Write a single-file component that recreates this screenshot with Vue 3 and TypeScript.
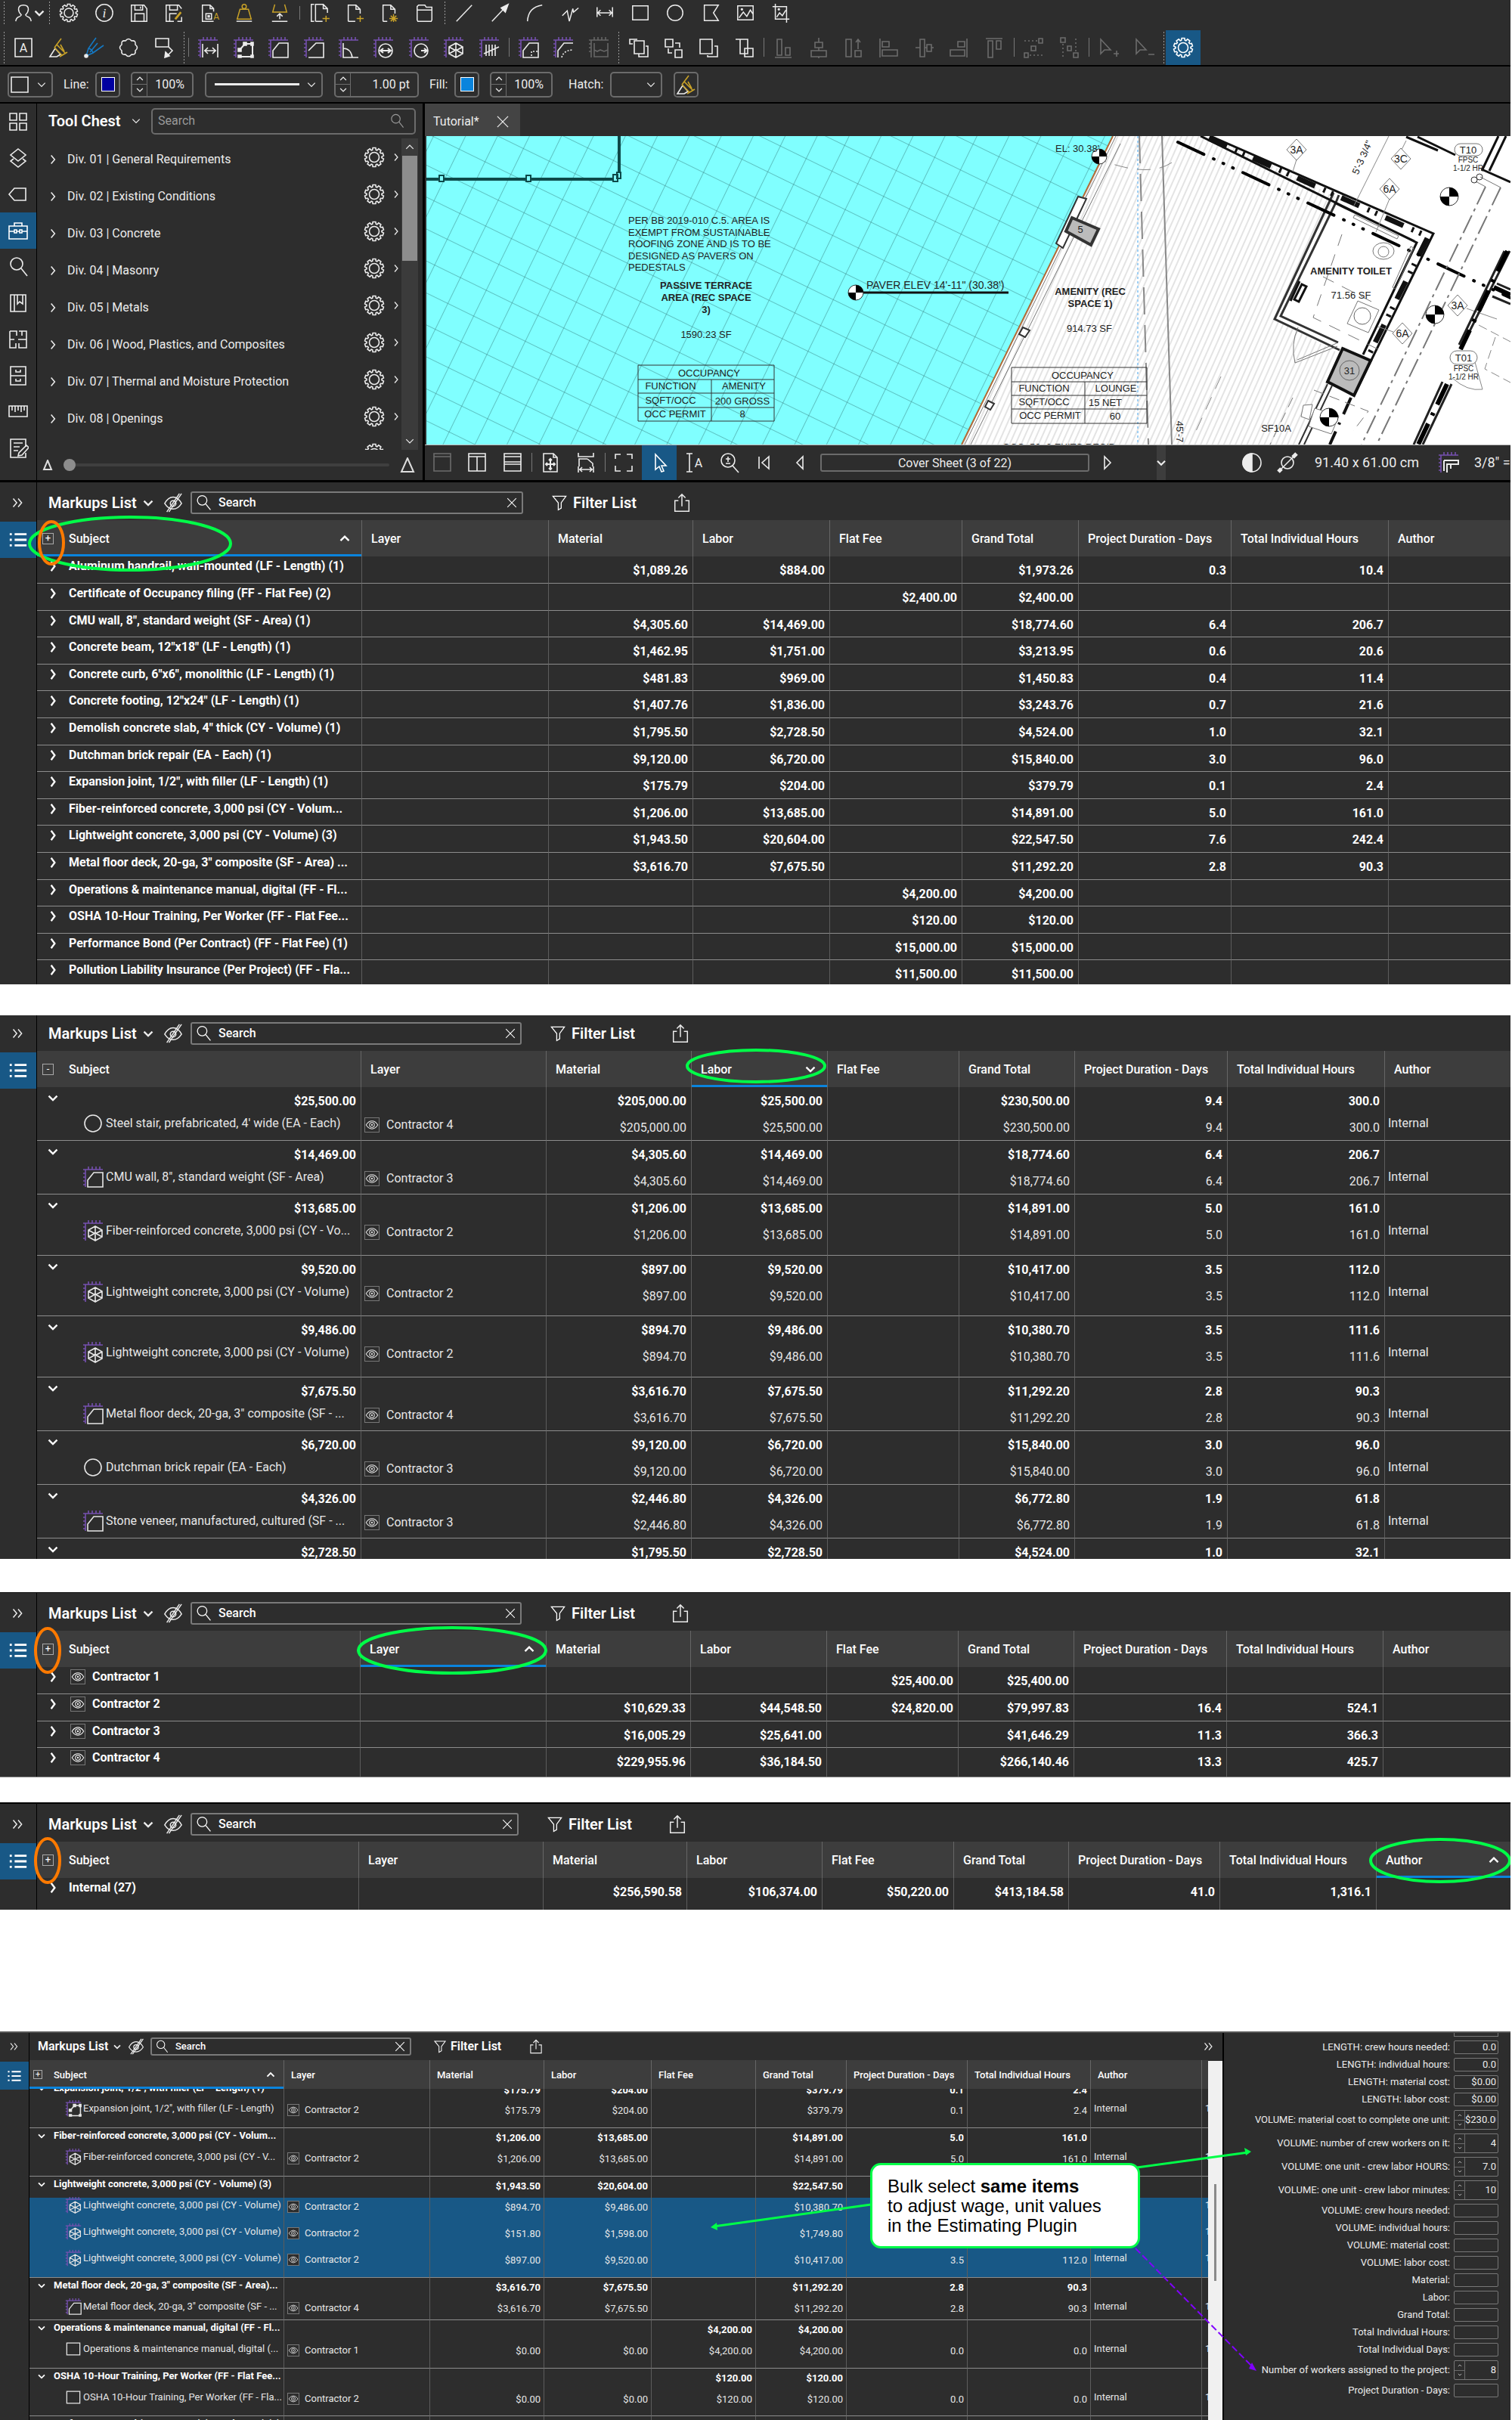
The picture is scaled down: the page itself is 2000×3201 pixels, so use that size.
<script setup lang="ts">
import { h } from 'vue'

/* ---------- icons ---------- */
const W = '#c9a227'
const gearPath = (() => {
  const pts: string[] = []
  const teeth = 10
  for (let i = 0; i < teeth; i++) {
    const base = (i / teeth) * Math.PI * 2
    const steps: [number, number][] = [[-0.24, 10], [-0.15, 12.6], [0.15, 12.6], [0.24, 10]]
    for (const [off, r] of steps) {
      pts.push(`${(14 + r * Math.sin(base + off)).toFixed(2)} ${(14 - r * Math.cos(base + off)).toFixed(2)}`)
    }
  }
  return 'M' + pts.join('L') + 'Z'
})()
const ruler =
  '<path stroke="#7650b0" d="M4 27V4M1 4h26M8 4V0M13 4V0M18 4V0M23 4V0M4 9H1M4 14H1M4 19H1M4 24H1"/>'
const gear = `<path d="${gearPath}"/><circle cx="14" cy="14" r="6.5"/>`
const page = 'M5 26V3h11l6 6v6M16 3v6h6'

const icons: Record<string, string> = {
  user: '<path d="M3 26q1-5 4-6t4-3q-4-4-4-8 0-6 7-6t7 6q0 4-4 8 1 2 4 3t4 6"/>',
  down: '<path d="M8 11l6 6 6-6"/>',
  downBold: '<path stroke-width="3" d="M7 11l7 7 7-7"/>',
  upBold: '<path stroke-width="3" d="M7 18l7-7 7 7"/>',
  rightBold: '<path stroke-width="3" d="M11 6l6 8-6 8"/>',
  up: '<path d="M8 17l6-6 6 6"/>',
  right: '<path d="M11 7l6 7-6 7"/>',
  gear,
  info: '<circle cx="14" cy="14" r="12"/><text x="14" y="20" font-family="Liberation Serif, serif" font-style="italic" font-size="19" text-anchor="middle" fill="currentColor" stroke="none">i</text>',
  save: '<path d="M3 3h18l4 5v18H3zM8 3v7h11V3M16 5v3M8 26V15h13v11"/>',
  saveAs: `<path d="M14 26H3V3h18l4 5M8 3v7h11V3M8 26V15h10M25 20v6h-6"/><path stroke="${W}" stroke-width="3" d="M16 23l8-10"/>`,
  docA: `<path d="M20 12V8l-5-5H4v23h16M15 3v5h5"/><path d="M9 15h8v8H9zM12 18h2v2h-2z"/><text x="24" y="24" font-family="Roboto, sans-serif" font-size="13" text-anchor="middle" fill="${W}" stroke="none">A</text>`,
  weight: `<path stroke="${W}" d="M8 9h12l4 14H4z"/><circle cx="14" cy="5" r="3" stroke="${W}"/><path d="M3 26h22"/>`,
  upload: `<path stroke="${W}" d="M7 2L4 13h20L21 2"/><path d="M14 23v-8M10 19l4-4 4 4M3 26h22"/>`,
  docsPlus: `<path d="M7 2H3v24h4M9 26V2h11l6 6v6M20 2v6h6M9 26h10"/><path stroke="${W}" d="M24 18v9M19 22h10"/>`,
  docPlus: `<path d="${page}M5 26h10"/><path stroke="${W}" d="M22 18v9M17 22h10"/>`,
  docStar: `<path d="${page}M5 26h6"/><path stroke="${W}" d="M20 16v11M14 22h12M16 18l8 8M24 18l-8 8"/>`,
  folder: '<path d="M3 24V5l2-2h9l2 3h8v18l-1 2H4zM3 10h21"/>',
  line: '<path d="M3 26L25 3"/>',
  arrow: '<path d="M3 26L20 8"/><path fill="currentColor" d="M26 2l-4 11-6-6z"/>',
  arc: '<path d="M4 26Q5 6 25 3"/>',
  poly: '<path d="M3 18l7-7 3 15 5-18 1 5 7-6"/>',
  dim: '<path d="M3 6v14M25 6v14M3 14h22M8 10l-4 4 4 4M20 10l4 4-4 4"/>',
  rect: '<path d="M3 4h22v20H3z"/>',
  circle: '<circle cx="14" cy="14" r="11"/>',
  flag: '<path d="M5 3h20l-7 11 7 11H5z"/>',
  image: '<path d="M3 4h22v20H3zM5 21l6-8 5 6 5-9 4 6"/><circle cx="9" cy="9" r="1"/>',
  crop: '<path d="M6 1v22h20M2 5h20v23M8 20l4-6 4 4 5-8"/><circle cx="11" cy="9" r="1"/>',
  textBox: '<path d="M3 2h22v24H3z"/><text x="14" y="20" font-family="Roboto, sans-serif" font-size="16" text-anchor="middle" fill="currentColor" stroke="none">A</text>',
  marker: `<path d="M2 26L9 15l7 8-5 3z"/><path stroke="${W}" d="M8 14l10 10M15 26l10-6M8 14l3-4 12 12M11 10l6-8M16 10l5 9"/>`,
  pen: '<path stroke="#1479c4" d="M17 1L7 15l-3 10 9-4L27 11M7 15q5 1 6 6M9 20L19 8"/><circle cx="4" cy="25" r="2" fill="currentColor"/>',
  cloud: '<path d="M10 5q4-5 8 0 6-1 5 5 5 4 0 8 1 6-5 5-4 5-8 0-6 1-5-5-5-4 0-8-1-6 5-5z"/>',
  callout: '<path d="M3 2h17v11H3zM20 13l5 5-8 8"/><path fill="currentColor" d="M15 27l1-7 5 5z"/>',
  mLength: ruler + '<path d="M7 9v18M27 9v18M9 18h16M14 14l-4 4 4 4M20 14l4 4-4 4"/>',
  mPoly: ruler + '<path stroke-width="2" d="M9 17l7-8h10v17H9"/><path fill="currentColor" d="M7 15h4v4H7zM14 7h4v4h-4zM24 7h3v4h-3zM7 24h4v3H7zM24 24h3v3h-3z"/>',
  mArea: ruler + '<path d="M7 27V18l8-10h12v19z"/>',
  mArea2: ruler + '<path d="M7 18L17 8h10v19H7"/>',
  mAngle: ruler + '<path d="M7 8v19h20M7 15q10 0 12 12"/>',
  mDiam: ruler + '<circle cx="17" cy="18" r="9"/><path stroke-width="2" d="M10 18h14M14 15l-4 3 4 3M20 15l4 3-4 3"/>',
  mRad: ruler + '<circle cx="17" cy="18" r="9"/><path stroke-width="2" d="M17 18h7M21 15l4 3-4 3"/>',
  mVol: ruler + '<path d="M8 13l9-5 9 5v9l-9 5-9-5zM8 13l9 5 9-5M17 18v9M8 22l9-5 9 5M17 8v9"/>',
  mCount: ruler + '<path d="M10 10v15M14 10v15M18 10v15M22 10v15M7 22l20-9"/>',
  mCut: ruler + '<path d="M7 27V18l8-10h12v19z"/><path stroke-dasharray="2 2" d="M18 25v-6h8"/>',
  mCut2: ruler + '<path d="M7 27V18l8-10h12"/><path stroke-dasharray="2 2" d="M12 27q2-9 14-10"/>',
  mSplit: '<path stroke="#666" d="M4 27V4M1 4h26M8 4V0M13 4V0M18 4V0M23 4V0M4 9H1M4 14H1M4 19H1M8 8v18h18V8M8 17l4 2 4-2 5 2 5-2"/>',
  front: '<path d="M9 5h13v17H9zM7 9H3V3h10M24 12h3v14H15v-4"/>',
  back: '<path d="M3 3h10v10H3zM16 17h9v10h-9zM16 8h6v6M12 21H7v-6"/>',
  forward: '<path d="M3 3h16v19H3zM22 12h4v14H13v-2"/>',
  backward: '<path d="M3 3h16v19H9V3M15 15h11v11H15z"/>',
  aBottom: '<path d="M3 27h22M6 3h6v21H6zM17 14h6v10h-6z"/>',
  aMid: '<path d="M9 7h10v7H9zM4 18h20v8H4zM14 1v6M14 14v4M14 26v2"/>',
  aUp: '<path d="M4 3h7v23H4zM16 18h8v8h-8zM20 16V3M17 7l3-4 3 4"/>',
  aLeft: '<path d="M3 2v25M6 6h9v7H6zM6 17h20v8H6z"/>',
  aCenter: '<path d="M9 3h6v23H9zM18 10h6v9h-6zM3 14h6M15 14h3M24 14h3"/>',
  aRight: '<path d="M25 2v25M13 6h9v7h-9zM3 17h19v8H3z"/>',
  aTop: '<path d="M3 2h22M6 5h6v22H6zM17 5h6v11h-6z"/>',
  spread: '<path d="M21 2h5v6h-5zM11 12h6v6h-6zM2 21h5v6H2z"/><path stroke-dasharray="2 3" d="M2 5h18M9 24h17"/>',
  spread2: '<path d="M3 1h6v6H3zM12 12h5v6h-5zM20 21h6v6h-6z"/><path stroke-dasharray="2 3" d="M6 9v18M23 2v18"/>',
  curPlus: '<path d="M4 3v19l5-5h8zM25 18v8M21 22h8"/>',
  curMinus: '<path d="M4 3v19l5-5h8zM20 23h8"/>',
  grid: '<path d="M3 3h9v9H3zM16 3h9v9h-9zM3 16h9v9H3zM16 16h9v9h-9z"/>',
  layers: '<path d="M14 2l10 8-10 8-10-8zM8 15l-4 3 10 8 10-8-4-3"/>',
  tag: '<path d="M2 14l7-8h15v16H9z"/>',
  toolbox: '<path d="M2 8h24v17H2zM9 8V4h10v4M2 15h7M12 15h4M19 15h7M9 13h3v4H9zM16 13h3v4h-3z"/>',
  search: '<circle cx="12" cy="10" r="8"/><path d="M18 16l8 10"/>',
  bookmark: '<path d="M4 3h20v22H4zM9 3v22M13 3v12l3-3 4 3V3"/>',
  plan: '<path d="M3 3h9v6M15 3h10v22H15v-6M3 3v22h8v-6M3 14h6M14 14h11M19 3v6"/>',
  cabinet: '<path d="M4 2h20v24H4zM4 14h20M11 6v3h6V6M11 18v3h6v-3"/>',
  measure: '<path d="M2 6h24v14H2zM6 6v6M10 6v8M14 6v6M18 6v8M22 6v6"/>',
  form: '<path d="M24 12V2H4v24h20v-6M8 7h12M8 12h8M8 17h6"/><path d="M25 10l3 3-9 10-5 1 1-4z"/>',
  list: '<path stroke-width="3" d="M9 6h17M9 14h17M9 22h17M2 6h3M2 14h3M2 22h3"/>',
  more: '<path d="M7 8l5 6-5 6M14 8l5 6-5 6"/>',
  close: '<path d="M5 5l18 18M23 5L5 23"/>',
  hide: '<path d="M2 15q5-9 12-9t12 9q-5 8-12 8T2 15z"/><circle cx="14" cy="15" r="4"/><path d="M8 27L26 1M5 27L23 1"/>',
  eye: '<path d="M2 14q5-8 12-8t12 8q-5 8-12 8T2 14z"/><circle cx="14" cy="14" r="5"/><circle cx="14" cy="14" r="1"/>',
  filter: '<path d="M3 3h22l-8 11v9l-5 3V14z"/>',
  share: '<path d="M9 11H4v15h20V11h-5M14 19V2M9 7l5-5 5 5"/>',
  pane: '<path d="M3 2h22v23H3zM3 6h22"/>',
  paneV: '<path d="M3 2h22v23H3zM3 6h22M14 6v19"/>',
  paneH: '<path d="M3 2h22v23H3zM3 6h22M3 13h22M3 16h22"/>',
  fitPage: '<path d="M18 2H5v24h18V7zM18 2v5h5"/><path stroke-width="2" d="M14 9v14M8 16h12M12 11l2-2 2 2M12 21l2 2 2-2M10 14l-2 2 2 2M18 14l2 2-2 2"/>',
  fitWidth: '<path d="M4 1v5h20V1M16 9H5v10M16 9l7 6v4M4 19v8M24 19v8M5 23h18M9 20l-3 3 3 3M19 20l3 3-3 3"/>',
  full: '<path d="M3 9V3h7M18 3h7v6M25 18v7h-7M10 25H3v-7"/>',
  cursor: '<path d="M9 3v20l5-4 3 7 3-1-3-7h6z"/>',
  textSel: '<path d="M4 2h8M8 2v24M4 26h8"/><text x="20" y="20" font-family="Roboto, sans-serif" font-size="16" text-anchor="middle" fill="currentColor" stroke="none">A</text>',
  zoomIn: '<circle cx="12" cy="11" r="9"/><path d="M18 18l8 9M12 6v7M9 9h6M9 15h6"/>',
  first: '<path d="M7 6v16M20 6v16L11 14z"/>',
  prev: '<path d="M18 6v16L10 14z"/>',
  next: '<path d="M10 6v16l8-8z"/>',
  contrast: '<circle cx="14" cy="14" r="12"/><path fill="currentColor" d="M14 2a12 12 0 0 0 0 24z"/>',
  noSnap: '<circle cx="14" cy="14" r="8"/><path d="M3 25L25 3"/><path stroke-width="5" d="M2 26l4-4M21 7l5-5"/>',
  caliper: ruler + '<path stroke-width="2" d="M8 11h19v5H12v11M8 11v14M17 16v6"/>',
  cube: '',
}
icons.cube = icons.mVol

const Icon = (props: { name: string }) =>
  h('svg', {
    viewBox: '0 0 28 28',
    class: 'icon',
    fill: 'none',
    stroke: 'currentColor',
    'aria-hidden': 'true',
    innerHTML: icons[props.name] ?? '',
  })
Icon.props = ['name']

/* ---------- toolbars ---------- */
interface Group { sep: 'dots' | 'solid'; items: string[]; dim?: boolean }
const rowOne: Group[] = [
  { sep: 'dots', items: ['gear', 'info', 'save', 'saveAs', 'docA', 'weight', 'upload'] },
  { sep: 'solid', items: ['docsPlus', 'docPlus', 'docStar', 'folder'] },
  { sep: 'dots', items: ['line', 'arrow', 'arc', 'poly', 'dim', 'rect', 'circle', 'flag', 'image', 'crop'] },
]
const rowTwo: Group[] = [
  { sep: 'dots', items: ['textBox', 'marker', 'pen', 'cloud', 'callout'] },
  { sep: 'dots', items: [] },
  { sep: 'solid', items: ['mLength', 'mPoly', 'mArea', 'mArea2', 'mAngle', 'mDiam', 'mRad', 'mVol', 'mCount'] },
  { sep: 'solid', items: ['mCut', 'mCut2', 'mSplit'] },
  { sep: 'dots', items: ['front', 'back', 'forward', 'backward'] },
  { sep: 'solid', items: ['aBottom', 'aMid', 'aUp', 'aLeft', 'aCenter', 'aRight', 'aTop'], dim: true },
  { sep: 'solid', items: ['spread', 'spread2'], dim: true },
  { sep: 'solid', items: ['curPlus', 'curMinus'], dim: true },
]
const groupWidth = (n: number) => ({ width: `${Math.floor(n * 46.5)}px` })
const railIcons = ['grid', 'layers', 'tag', 'toolbox', 'search', 'bookmark', 'plan', 'cabinet', 'measure', 'form']
const divisions = [
  'Div. 01 | General Requirements',
  'Div. 02 | Existing Conditions',
  'Div. 03 | Concrete',
  'Div. 04 | Masonry',
  'Div. 05 | Metals',
  'Div. 06 | Wood, Plastics, and Composites',
  'Div. 07 | Thermal and Moisture Protection',
  'Div. 08 | Openings',
  '',
]

/* ---------- floor plan ---------- */
const diamonds = [
  { x: 1715, y: 198, t: '3A' },
  { x: 1853, y: 210, t: '3C' },
  { x: 1838, y: 250, t: '6A' },
  { x: 1855, y: 441, t: '6A' },
  { x: 1928, y: 404, t: '3A' },
]
const targets = [
  { x: 1132, y: 387, r: 10 },
  { x: 1454, y: 207, r: 10 },
  { x: 1917, y: 260, r: 12 },
  { x: 1898, y: 416, r: 12 },
  { x: 1758, y: 552, r: 12 },
]

/* ---------- markup lists ---------- */
type Vals = [string, string, string, string, string, string]
interface Row {
  label: string
  v: Vals
  item?: boolean
  icon?: string
  layer?: string
  author?: string
  eye?: boolean
  money?: boolean
  height: number
  end?: boolean
  selected?: boolean
  cut?: boolean
}
interface Mark { cx: number; cy: number; rx: number; ry: number; tone: string }
interface Panel {
  id: string
  search: number
  cols: number[]
  sort: number
  dir: 'upBold' | 'downBold'
  open: boolean
  fold: string
  rows: Row[]
  marks: Mark[]
}
const heads = ['Subject', 'Layer', 'Material', 'Labor', 'Flat Fee', 'Grand Total', 'Project Duration - Days', 'Total Individual Hours', 'Author']

const simple = (label: string, m: string, l: string, f: string, g: string, d: string, hr: string, height = 36): Row => ({
  label, v: [m, l, f, g, d, hr], height, end: true,
})
const bySubject: Row[] = [
  simple('Aluminum handrail, wall-mounted (LF - Length) (1)', '$1,089.26', '$884.00', '', '$1,973.26', '0.3', '10.4'),
  simple('Certificate of Occupancy filing (FF - Flat Fee) (2)', '', '', '$2,400.00', '$2,400.00', '', ''),
  simple('CMU wall, 8", standard weight (SF - Area) (1)', '$4,305.60', '$14,469.00', '', '$18,774.60', '6.4', '206.7'),
  simple('Concrete beam, 12"x18" (LF - Length) (1)', '$1,462.95', '$1,751.00', '', '$3,213.95', '0.6', '20.6'),
  simple('Concrete curb, 6"x6", monolithic (LF - Length) (1)', '$481.83', '$969.00', '', '$1,450.83', '0.4', '11.4'),
  simple('Concrete footing, 12"x24" (LF - Length) (1)', '$1,407.76', '$1,836.00', '', '$3,243.76', '0.7', '21.6'),
  simple('Demolish concrete slab, 4" thick (CY - Volume) (1)', '$1,795.50', '$2,728.50', '', '$4,524.00', '1.0', '32.1'),
  simple('Dutchman brick repair (EA - Each) (1)', '$9,120.00', '$6,720.00', '', '$15,840.00', '3.0', '96.0'),
  simple('Expansion joint, 1/2", with filler (LF - Length) (1)', '$175.79', '$204.00', '', '$379.79', '0.1', '2.4'),
  simple('Fiber-reinforced concrete, 3,000 psi (CY - Volum...', '$1,206.00', '$13,685.00', '', '$14,891.00', '5.0', '161.0'),
  simple('Lightweight concrete, 3,000 psi (CY - Volume) (3)', '$1,943.50', '$20,604.00', '', '$22,547.50', '7.6', '242.4'),
  simple('Metal floor deck, 20-ga, 3" composite (SF - Area) ...', '$3,616.70', '$7,675.50', '', '$11,292.20', '2.8', '90.3'),
  simple('Operations & maintenance manual, digital (FF - Fl...', '', '', '$4,200.00', '$4,200.00', '', ''),
  simple('OSHA 10-Hour Training, Per Worker (FF - Flat Fee...', '', '', '$120.00', '$120.00', '', ''),
  simple('Performance Bond (Per Contract) (FF - Flat Fee) (1)', '', '', '$15,000.00', '$15,000.00', '', ''),
  simple('Pollution Liability Insurance (Per Project) (FF - Fla...', '', '', '$11,500.00', '$11,500.00', '', ''),
].map((r, i) => ({ ...r, height: i % 5 === 2 || i % 5 === 4 ? 35 : 36 }))

const pair = (labor: string, label: string, icon: string, layer: string, m: string, g: string, d: string, hr: string, height = 36): Row[] => [
  { label: labor, v: [m, labor, '', g, d, hr], money: true, height: 35 },
  { label, v: [m, labor, '', g, d, hr], item: true, icon, layer, author: 'Internal', height, end: true },
]
const byLabor: Row[] = [
  ...pair('$25,500.00', "Steel stair, prefabricated, 4' wide (EA - Each)", 'circle', 'Contractor 4', '$205,000.00', '$230,500.00', '9.4', '300.0'),
  ...pair('$14,469.00', 'CMU wall, 8", standard weight (SF - Area)', 'mArea', 'Contractor 3', '$4,305.60', '$18,774.60', '6.4', '206.7'),
  ...pair('$13,685.00', 'Fiber-reinforced concrete, 3,000 psi (CY - Vo...', 'cube', 'Contractor 2', '$1,206.00', '$14,891.00', '5.0', '161.0', 46),
  ...pair('$9,520.00', 'Lightweight concrete, 3,000 psi (CY - Volume)', 'cube', 'Contractor 2', '$897.00', '$10,417.00', '3.5', '112.0', 45),
  ...pair('$9,486.00', 'Lightweight concrete, 3,000 psi (CY - Volume)', 'cube', 'Contractor 2', '$894.70', '$10,380.70', '3.5', '111.6', 46),
  ...pair('$7,675.50', 'Metal floor deck, 20-ga, 3" composite (SF - ...', 'mArea', 'Contractor 4', '$3,616.70', '$11,292.20', '2.8', '90.3'),
  ...pair('$6,720.00', 'Dutchman brick repair (EA - Each)', 'circle', 'Contractor 3', '$9,120.00', '$15,840.00', '3.0', '96.0'),
  ...pair('$4,326.00', 'Stone veneer, manufactured, cultured (SF - ...', 'mArea', 'Contractor 3', '$2,446.80', '$6,772.80', '1.9', '61.8'),
  { label: '$2,728.50', v: ['$1,795.50', '$2,728.50', '', '$4,524.00', '1.0', '32.1'], money: true, height: 35 },
]
const byLayer: Row[] = [
  { ...simple('Contractor 1', '', '', '$25,400.00', '$25,400.00', '', ''), eye: true },
  { ...simple('Contractor 2', '$10,629.33', '$44,548.50', '$24,820.00', '$79,997.83', '16.4', '524.1'), eye: true },
  { ...simple('Contractor 3', '$16,005.29', '$25,641.00', '', '$41,646.29', '11.3', '366.3', 35), eye: true },
  { ...simple('Contractor 4', '$229,955.96', '$36,184.50', '', '$266,140.46', '13.3', '425.7', 40), eye: true, end: false },
]
const byAuthor: Row[] = [
  { ...simple('Internal (27)', '$256,590.58', '$106,374.00', '$50,220.00', '$413,184.58', '41.0', '1,316.1', 44), end: false },
]
const sub = (label: string, icon: string, layer: string, v: Vals, height: number, end = true, selected = false, author = 'Internal'): Row => ({
  label, icon, layer, v, height, end, selected, author, item: true,
})
const head = (label: string, v: Vals, height = 28, cut = false): Row => ({ label, v, height, cut })
const lw = 'Lightweight concrete, 3,000 psi (CY - Volume)'
const bulk: Row[] = [
  head('Expansion joint, 1/2", with filler (LF - Length) (1)', ['$175.79', '$204.00', '', '$379.79', '0.1', '2.4'], 16, true),
  sub('Expansion joint, 1/2", with filler (LF - Length)', 'mPoly', 'Contractor 2', ['$175.79', '$204.00', '', '$379.79', '0.1', '2.4'], 36),
  head('Fiber-reinforced concrete, 3,000 psi (CY - Volum...', ['$1,206.00', '$13,685.00', '', '$14,891.00', '5.0', '161.0']),
  sub('Fiber-reinforced concrete, 3,000 psi (CY - V...', 'cube', 'Contractor 2', ['$1,206.00', '$13,685.00', '', '$14,891.00', '5.0', '161.0'], 36),
  head('Lightweight concrete, 3,000 psi (CY - Volume) (3)', ['$1,943.50', '$20,604.00', '', '$22,547.50', '', '']),
  sub(lw, 'cube', 'Contractor 2', ['$894.70', '$9,486.00', '', '$10,380.70', '', ''], 35, false, true, ''),
  sub(lw, 'cube', 'Contractor 2', ['$151.80', '$1,598.00', '', '$1,749.80', '', ''], 35, false, true, ''),
  sub(lw, 'cube', 'Contractor 2', ['$897.00', '$9,520.00', '', '$10,417.00', '3.5', '112.0'], 36, true, true),
  head('Metal floor deck, 20-ga, 3" composite (SF - Area)...', ['$3,616.70', '$7,675.50', '', '$11,292.20', '2.8', '90.3']),
  sub('Metal floor deck, 20-ga, 3" composite (SF - ...', 'mArea', 'Contractor 4', ['$3,616.70', '$7,675.50', '', '$11,292.20', '2.8', '90.3'], 28),
  head('Operations & maintenance manual, digital (FF - Fl...', ['', '', '$4,200.00', '$4,200.00', '', '']),
  sub('Operations & maintenance manual, digital (...', 'rect', 'Contractor 1', ['$0.00', '$0.00', '$4,200.00', '$4,200.00', '0.0', '0.0'], 36),
  head('OSHA 10-Hour Training, Per Worker (FF - Flat Fee...', ['', '', '$120.00', '$120.00', '', '']),
  sub('OSHA 10-Hour Training, Per Worker (FF - Fla...', 'rect', 'Contractor 2', ['$0.00', '$0.00', '$120.00', '$120.00', '0.0', '0.0'], 35),
  head('Performance Bond (Per Contract) (FF - Flat Fee) (1)', ['', '', '', '', '', '']),
]

const green = '#00ff48'
const orange = '#ff7a00'
const panels: Panel[] = [
  {
    id: 'subject', search: 440, cols: [430, 247, 191, 181, 175, 154, 202, 208], sort: 0, dir: 'upBold', open: false, fold: '+', rows: bySubject,
    marks: [{ cx: 172, cy: 81, rx: 133, ry: 35, tone: green }, { cx: 68, cy: 80, rx: 16, ry: 28, tone: orange }],
  },
  {
    id: 'labor', search: 438, cols: [429, 245, 192, 180, 174, 153, 202, 208], sort: 3, dir: 'downBold', open: true, fold: '-', rows: byLabor,
    marks: [{ cx: 1000, cy: 67, rx: 91, ry: 21, tone: green }],
  },
  {
    id: 'layers', search: 438, cols: [428, 246, 191, 180, 174, 153, 202, 207], sort: 1, dir: 'upBold', open: false, fold: '+', rows: byLayer,
    marks: [{ cx: 598, cy: 76, rx: 124, ry: 30, tone: green }, { cx: 63, cy: 76, rx: 16, ry: 29, tone: orange }],
  },
  {
    id: 'author', search: 434, cols: [426, 244, 190, 179, 174, 152, 200, 207], sort: 8, dir: 'upBold', open: false, fold: '+', rows: byAuthor,
    marks: [{ cx: 1905, cy: 75, rx: 92, ry: 28, tone: green }, { cx: 63, cy: 75, rx: 16, ry: 29, tone: orange }],
  },
  {
    id: 'bulk', search: 345, cols: [337, 193, 151, 142, 138, 120, 160, 163, 147], sort: 0, dir: 'upBold', open: true, fold: '+', rows: bulk,
    marks: [],
  },
]

/* ---------- estimating form ---------- */
const fields: { label: string; value: string; spin?: boolean }[] = [
  { label: 'LENGTH: crew hours needed:', value: '0.0' },
  { label: 'LENGTH: individual hours:', value: '0.0' },
  { label: 'LENGTH: material cost:', value: '$0.00' },
  { label: 'LENGTH: labor cost:', value: '$0.00' },
  { label: 'VOLUME: material cost to complete one unit:', value: '$230.00', spin: true },
  { label: 'VOLUME: number of crew workers on it:', value: '4', spin: true },
  { label: 'VOLUME: one unit - crew labor HOURS:', value: '7.0', spin: true },
  { label: 'VOLUME: one unit - crew labor minutes:', value: '10', spin: true },
  { label: 'VOLUME: crew hours needed:', value: '' },
  { label: 'VOLUME: individual hours:', value: '' },
  { label: 'VOLUME: material cost:', value: '' },
  { label: 'VOLUME: labor cost:', value: '' },
  { label: 'Material:', value: '' },
  { label: 'Labor:', value: '' },
  { label: 'Grand Total:', value: '' },
  { label: 'Total Individual Hours:', value: '' },
  { label: 'Total Individual Days:', value: '' },
  { label: 'Number of workers assigned to the project:', value: '8', spin: true },
  { label: 'Project Duration - Days:', value: '' },
]
</script>

<template>
  <div class="page">
    <section class="app">
      <div class="tools">
        <div class="tool-row first">
          <span class="sep dots"></span>
          <button class="user" aria-label="Account"><Icon name="user" /><Icon class="tiny" name="downBold" /></button>
          <template v-for="(g, i) in rowOne" :key="i">
            <span class="sep" :class="g.sep"></span>
            <div class="group" :style="groupWidth(g.items.length)">
              <button v-for="n in g.items" :key="n" :aria-label="n"><Icon :name="n" /></button>
            </div>
          </template>
        </div>
        <div class="tool-row">
          <template v-for="(g, i) in rowTwo" :key="i">
            <span class="sep" :class="g.sep"></span>
            <div v-if="g.items.length" class="group" :class="{ dim: g.dim }" :style="groupWidth(g.items.length)">
              <button v-for="n in g.items" :key="n" :aria-label="n"><Icon :name="n" /></button>
            </div>
          </template>
          <span class="sep dots"></span>
          <button class="picked" aria-label="Settings"><Icon name="gear" /></button>
        </div>
      </div>

      <div class="props">
        <label class="drop shape"><Icon name="rect" /><select aria-label="Shape"></select><Icon class="tiny" name="down" /></label>
        <span class="cap line-cap">Line:</span>
        <button class="chip" aria-label="Line colour"><i class="swatch navy"></i></button>
        <div class="spin w83"><span class="steps"><button aria-label="Up"><Icon name="up" /></button><button aria-label="Down"><Icon name="down" /></button></span><input aria-label="Line opacity" value="100%" /></div>
        <label class="drop style"><i class="stroke"></i><select aria-label="Line style"></select><Icon class="tiny" name="down" /></label>
        <div class="spin w112"><span class="steps"><button aria-label="Up"><Icon name="up" /></button><button aria-label="Down"><Icon name="down" /></button></span><input aria-label="Line width" value="1.00 pt" /></div>
        <span class="cap fill-cap">Fill:</span>
        <button class="chip" aria-label="Fill colour"><i class="swatch sky"></i></button>
        <div class="spin w83"><span class="steps"><button aria-label="Up"><Icon name="up" /></button><button aria-label="Down"><Icon name="down" /></button></span><input aria-label="Fill opacity" value="100%" /></div>
        <span class="cap hatch-cap">Hatch:</span>
        <label class="drop hatch"><select aria-label="Hatch"></select><Icon class="tiny" name="down" /></label>
        <button class="chip" aria-label="Highlight"><Icon name="marker" /></button>
      </div>

      <div class="work">
        <nav class="rail-top">
          <button v-for="n in railIcons" :key="n" :class="{ picked: n === 'toolbox' }" :aria-label="n"><Icon :name="n" /></button>
        </nav>
        <aside class="chest">
          <header>
            <h2>Tool Chest</h2>
            <Icon class="tiny" name="down" />
            <label class="find"><input type="text" placeholder="Search" aria-label="Search tools" /><Icon name="search" /></label>
          </header>
          <div class="chest-body">
            <ul>
              <li v-for="d in divisions" :key="d">
                <Icon class="open" name="right" /><span>{{ d }}</span>
                <Icon class="cog" name="gear" /><Icon class="go" name="right" />
              </li>
            </ul>
            <div class="scroll"><Icon name="up" /><i></i><Icon name="down" /></div>
          </div>
          <footer>
            <svg class="tri" width="14" height="14" viewBox="0 0 14 14"><path d="M7 1l5 12H2z" /></svg>
            <input type="range" min="0" max="100" value="0" aria-label="Thumbnail size" />
            <svg class="tri" width="20" height="20" viewBox="0 0 20 20"><path d="M10 1l8 18H2z" /></svg>
          </footer>
        </aside>
        <main class="doc">
          <div class="tabs"><div class="tab"><span>Tutorial*</span><button aria-label="Close tab"><Icon name="close" /></button></div></div>
          <svg class="plan" viewBox="564 180 1434 408" preserveAspectRatio="xMinYMin slice">
            <defs>
              <pattern id="pavers" width="38" height="38" patternUnits="userSpaceOnUse" patternTransform="translate(573 180) rotate(26)">
                <path d="M0 0H38M0 0V38" fill="none" stroke="#3a8585" stroke-width="1" />
              </pattern>
              <pattern id="floor" width="7" height="7" patternUnits="userSpaceOnUse" patternTransform="rotate(24)">
                <path d="M3 0V7" fill="none" stroke="#c8c8c8" stroke-width="1" />
              </pattern>
            </defs>
            <path fill="#fff" d="M564 180h1434v408H564z" />
            <path fill="url(#floor)" d="M1472 180h130l164 80-80 162 90 48-50 118h-454z" />
            <path fill="#80ffff" d="M564 180h908l-200 408H564z" />
            <path fill="url(#pavers)" d="M564 180h908l-200 408H564z" />
            <g fill="none" stroke="#0e4a4a">
              <path stroke-width="4" d="M564 237h254M819 180v54" />
              <g fill="#80ffff" stroke-width="2"><path d="M581 232h6v8h-6zM696 232h6v8h-6zM811 231h6v9h-6zM816 228h5v8h-5z" /></g>
            </g>
            <g fill="none" stroke="#333">
              <path stroke="#b06a35" stroke-width="2" d="M1472 180l-200 408" />
              <path stroke="#777" d="M1476 180l-200 408M1482 190l-198 398" />
              <path stroke="#888" stroke-dasharray="36 14" stroke-width="2" d="M1507 180l12 408" />
              <path stroke="#888" stroke-width="2" d="M1537 180l13 408" />
              <path stroke="#9fd0f5" stroke-width="2" stroke-dasharray="3 3" d="M1505 180v408" />
              <path stroke="#888" stroke-dasharray="18 12" d="M1550 215q-30 20-90-2M1615 498l-33 72" />
              <path fill="#fff" stroke-width="2" d="M1426 260l11 3-31 65-9-6zM1353 433l9 4-6 9-8-4zM1307 530l8 4-5 8-7-4z" />
              <path fill="#bbb" stroke-width="4" d="M1418 288l35 15-10 21-33-18z" />
              <path fill="#fff" stroke="none" d="M1770 262l104 55-70 150-110-49z" />
              <path stroke-width="3" d="M1764 255l-78 167 86 41M1771 258l-4 10-73 150 76 35" />
              <path stroke="#111" stroke-width="3" d="M1588 180l286 141-71 148M1765 268l106 51M1601 180l295 129-105 214" />
              <path stroke="#111" stroke-width="7" stroke-dasharray="26 12 3 8 3 12" d="M1599 183l290 130-80 160" />
              <path stroke="#777" stroke-dasharray="16 12" d="M1775 310l-38 110 90 44M1750 366l70 36" />
              <path stroke="#000" stroke-linecap="round" stroke-width="4" stroke-dasharray="38 14 1 13 1 13 1 14" d="M1558 188l440 206" />
              <path stroke="#888" d="M1837 180l-46 92M1838 263l-18 44M1715 211l-5 16M1860 186l-6 12M1822 432l21 7M1940 408l40 14" />
              <path fill="#bbb" stroke="#111" stroke-width="4" d="M1776 461l37 16-22 46-35-18z" />
              <circle cx="1785" cy="490" r="13" stroke="#666" />
              <path stroke-width="2" d="M1756 508l-38 80M1762 510l-37 78" />
              <path stroke="#777" d="M1717 433q-10 22-4 47l56-22M1716 476l52-22" />
              <path stroke="#111" stroke-width="4" stroke-dasharray="24 12 3 10" d="M1787 526l-28 62" />
              <path stroke="#777" stroke-dasharray="14 8" d="M1738 516l72 28-20 26M1710 526l-30 62" />
              <path fill="#fff" stroke="#777" d="M1724 536l12-1-4 20-11-4zM1739 540l32 10-10 24-30-10z" />
              <path stroke="#777" stroke-width="2" stroke-dasharray="26 6 4 6" d="M1965 247l-164 341M1985 248l-164 340" />
              <path stroke="#777" d="M1952 240l13 7M1958 234l27 14" /><circle cx="1950" cy="238" r="4" /><circle cx="1957" cy="234" r="4" />
              <path stroke="#111" stroke-width="3" d="M1860 181l42 18M1875 181l50 24M1982 180l-22 46M1992 180l-22 46M1960 224l38 17" />
              <path stroke="#222" stroke-width="3" d="M1997 332l-65 130M1990 332l-60 124M1908 505l-38 83M1920 508l-38 80M1980 375l18 8M1974 392l24 10" />
              <path stroke="#000" stroke-width="6" stroke-dasharray="30 12 4 12" d="M1994 332l-62 130M1914 508l-38 80M1976 380l22 10" />
              <path stroke="#888" stroke-dasharray="12 6" d="M1956 430l42 22M1978 446l-14 42 34 18" />
              <path stroke="#888" d="M1921 500q20 18 40 15l-10-36" />
              <ellipse cx="1830" cy="332" rx="14" ry="11" stroke="#777" /><ellipse cx="1830" cy="333" rx="7" ry="7" stroke="#777" />
              <path stroke="#777" d="M1796 398l28 12-14 30-28-12zM1866 326l-24 54 4 2 24-54zM1792 284l58 28-2 4-58-28z" /><circle cx="1802" cy="418" r="11" stroke="#666" />
              <path stroke-width="3" stroke="#111" d="M1719 372l-12 26M1722 376l6 3-10 20-6-3z" />
            </g>
            <g v-for="(t, i) in targets" :key="i">
              <circle :cx="t.x" :cy="t.y" :r="t.r" fill="#fff" stroke="#333" />
              <path fill="#000" :d="`M${t.x} ${t.y}v${-t.r}a${t.r} ${t.r} 0 0 1 ${t.r} ${t.r}zM${t.x} ${t.y}v${t.r}a${t.r} ${t.r} 0 0 1 ${-t.r} ${-t.r}z`" />
            </g>
            <path fill="none" stroke="#111" stroke-width="3" d="M1142 387h192" />
            <g v-for="(d, i) in diamonds" :key="'d' + i">
              <path fill="#fff" stroke="#777" :d="`M${d.x} ${d.y - 14}l13 14-13 14-13-14z`" />
              <text class="t14" :x="d.x" :y="d.y + 5" text-anchor="middle">{{ d.t }}</text>
            </g>
            <g fill="#fff" stroke="#777"><rect x="1924" y="190" width="37" height="16" rx="8" /><rect x="1918" y="464" width="36" height="18" rx="9" /></g>
            <g fill="none" stroke="#333">
              <path d="M844 483h180v74H844zM844 502h180M844 520h180M844 539h180M941 502v55" />
              <path d="M1338 486h179v74h-179zM1338 505h179M1338 523h179M1338 541h179M1435 505v55" />
            </g>
            <g class="t13">
              <text x="831" y="296">PER BB 2019-010 C.5. AREA IS</text>
              <text x="831" y="312">EXEMPT FROM SUSTAINABLE</text>
              <text x="831" y="327">ROOFING ZONE AND IS TO BE</text>
              <text x="831" y="343">DESIGNED AS PAVERS ON</text>
              <text x="831" y="358">PEDESTALS</text>
              <text x="1396" y="201">EL: 30.38'</text>
              <text x="1326" y="596">OCC. 50: 2 EXITS REQ'D</text>
            </g>
            <text class="t14" x="1146" y="382">PAVER ELEV 14'-11" (30.38')</text>
            <g class="t13 mid">
              <g class="bold">
                <text x="934" y="382">PASSIVE TERRACE</text><text x="934" y="398">AREA (REC SPACE</text><text x="934" y="414">3)</text>
                <text x="1442" y="390">AMENITY (REC</text><text x="1442" y="406">SPACE 1)</text><text x="1787" y="363">AMENITY TOILET</text>
              </g>
              <text x="934" y="447">1590.23 SF</text><text x="1441" y="439">914.73 SF</text><text x="1787" y="395">71.56 SF</text>
              <text x="938" y="498">OCCUPANCY</text><text x="887" y="515">FUNCTION</text><text x="984" y="515">AMENITY</text>
              <text x="887" y="534">SQFT/OCC</text><text x="982" y="535">200 GROSS</text><text x="893" y="552">OCC PERMIT</text><text x="982" y="552">8</text>
              <text x="1432" y="501">OCCUPANCY</text><text x="1381" y="518">FUNCTION</text><text x="1476" y="518">LOUNGE</text>
              <text x="1381" y="536">SQFT/OCC</text><text x="1462" y="537">15 NET</text><text x="1389" y="554">OCC PERMIT</text><text x="1475" y="555">60</text>
              <text x="1429" y="308">5</text><text x="1785" y="495">31</text><text x="1688" y="571">SF10A</text>
              <text x="1942" y="203">T10</text><text x="1936" y="478">T01</text>
              <text transform="translate(1806 210) rotate(-66)">5'-3 3/4"</text><text transform="translate(1556 571) rotate(90)">45'-7</text>
              <g class="small"><text x="1942" y="215">FPSC</text><text x="1942" y="226">1-1/2 HR</text><text x="1936" y="491">FPSC</text><text x="1936" y="502">1-1/2 HR</text></g>
            </g>
          </svg>
          <div class="status">
            <div class="group" :style="groupWidth(3)">
              <button class="faded" aria-label="Single pane"><Icon name="pane" /></button><button aria-label="Split vertically"><Icon name="paneV" /></button><button aria-label="Split horizontally"><Icon name="paneH" /></button>
            </div>
            <span class="sep solid"></span>
            <div class="group" :style="groupWidth(2)"><button aria-label="Fit page"><Icon name="fitPage" /></button><button aria-label="Fit width"><Icon name="fitWidth" /></button></div>
            <span class="sep solid"></span>
            <div class="group" :style="groupWidth(6)">
              <button aria-label="Full screen"><Icon name="full" /></button><button class="picked" aria-label="Select"><Icon name="cursor" /></button>
              <button aria-label="Select text"><Icon name="textSel" /></button><button aria-label="Zoom"><Icon name="zoomIn" /></button>
              <button aria-label="First page"><Icon name="first" /></button><button aria-label="Previous page"><Icon name="prev" /></button>
            </div>
            <input class="sheet" aria-label="Current sheet" value="Cover Sheet (3 of 22)" />
            <button class="next" aria-label="Next page"><Icon name="next" /></button>
            <button class="fold" aria-label="More"><Icon name="downBold" /></button>
            <div class="measure">
              <Icon name="contrast" /><Icon name="noSnap" /><span>91.40 x 61.00 cm</span><Icon class="cal" name="caliper" /><span>3/8" =</span>
            </div>
          </div>
        </main>
      </div>
    </section>

    <section v-for="p in panels" :key="p.id" class="panel" :class="p.id">
      <nav class="rail"><button class="expand" aria-label="Expand"><Icon name="more" /></button><button class="picked" aria-label="Markups"><Icon name="list" /></button></nav>
      <div class="sheet-area">
        <div class="bar">
          <h2>Markups List</h2>
          <Icon class="tiny" name="downBold" />
          <Icon class="hide" name="hide" />
          <label class="find" :style="{ width: p.search + 'px' }"><Icon name="search" /><input type="text" placeholder="Search" :aria-label="'Search markups by ' + p.id" /><Icon class="x" name="close" /></label>
          <button class="filter"><Icon name="filter" />Filter List</button>
          <button class="share" aria-label="Export"><Icon name="share" /></button>
          <button v-if="p.id === 'bulk'" class="tail" aria-label="Expand"><Icon name="more" /></button>
        </div>
        <div class="table-wrap">
          <table>
            <colgroup><col v-for="(w, i) in p.cols" :key="i" :style="{ width: w + 'px' }" /><col /></colgroup>
            <thead>
              <tr>
                <th v-for="(t, i) in heads" :key="t" :class="{ sorted: p.sort === i, subj: i === 0 }">
                  <span v-if="i === 0" class="foldbox">{{ p.fold }}</span>{{ t }}
                  <Icon v-if="p.sort === i" class="caret" :name="p.dir" />
                </th>
                <th v-if="p.id === 'bulk'"></th>
              </tr>
            </thead>
            <tbody>
              <tr v-for="(r, i) in p.rows" :key="i" :class="{ item: r.item, end: r.end, selected: r.selected, cut: r.cut }" :style="{ height: r.height + 'px' }">
                <td class="subj">
                  <div class="cell">
                    <Icon v-if="!r.item" class="chev" :name="p.open ? 'downBold' : 'rightBold'" />
                    <Icon v-if="r.icon" class="kind" :name="r.icon" />
                    <span v-if="r.eye" class="eye"><Icon name="eye" /></span>
                    <span :class="{ money: r.money }">{{ r.label }}</span>
                  </div>
                </td>
                <td class="layer"><div v-if="r.layer" class="cell"><span class="eye"><Icon name="eye" /></span><span>{{ r.layer }}</span></div></td>
                <td v-for="(v, k) in r.v" :key="k" class="num"><div class="cell">{{ v }}</div></td>
                <td class="who"><div v-if="r.author" class="cell">{{ r.author }}</div></td>
                <td v-if="p.id === 'bulk'" class="who"><div v-if="r.item" class="cell">1</div></td>
              </tr>
            </tbody>
          </table>
        </div>
      </div>
      <template v-if="p.id === 'bulk'">
        <div class="gutter"><i></i></div>
        <form class="estimate">
          <div class="stub"></div>
          <div v-for="(f, i) in fields" :key="f.label" class="field" :class="{ tall: f.spin }">
            <label :for="'f' + i">{{ f.label }}</label>
            <div class="box">
              <span v-if="f.spin" class="steps"><button type="button" aria-label="Up"><Icon name="up" /></button><button type="button" aria-label="Down"><Icon name="down" /></button></span>
              <input :id="'f' + i" type="text" :value="f.value" />
            </div>
          </div>
        </form>
        <svg class="over">
          <g fill="none" stroke="#00ff48" stroke-width="3">
            <path d="M1152 227L944 256M1504 178l147-20" />
            <path fill="#00ff48" stroke="none" d="M940 257l8-6 1 10zM1655 157l-9-5 2 10z" />
          </g>
          <path fill="none" stroke="#8000ff" stroke-width="2" stroke-dasharray="9 4" d="M1502 285l156 158" />
          <path fill="#8000ff" d="M1662 447l-6-11-4 8z" />
        </svg>
        <p class="note">Bulk select <b>same items</b><br />to adjust wage, unit values<br />in the Estimating Plugin</p>
      </template>
      <svg v-if="p.marks.length" class="over">
        <ellipse v-for="(m, i) in p.marks" :key="i" :cx="m.cx" :cy="m.cy" :rx="m.rx" :ry="m.ry" :stroke="m.tone" fill="none" stroke-width="4" />
      </svg>
    </section>
  </div>
</template>

<style>
body { background: #fff; }
</style>

<style scoped>
.page { font: 16px/20px Roboto, "Noto Sans", sans-serif; color: #ececec; padding-right: 2px; overflow: hidden; }
.page *, .page *::before { box-sizing: border-box; }
button { background: none; border: 0; padding: 0; margin: 0; color: inherit; font: inherit; display: flex; align-items: center; justify-content: center; }
input, select { font: inherit; color: inherit; background: none; border: 0; padding: 0; margin: 0; outline: 0; min-width: 0; }
h2 { margin: 0; font-weight: 600; font-size: 20px; line-height: 24px; color: #fff; white-space: nowrap; }
.icon { width: 28px; height: 28px; flex: none; stroke-width: 1.6; display: block; }
.tiny { width: 22px; height: 22px; }
.picked { background: #185886; color: #fff; }

.app { background: #2d2d2d; }
.tools { display: flex; flex-direction: column; gap: 6px; border-bottom: 2px solid #000; }
.tool-row { display: flex; height: 46px; padding-left: 2px; align-items: stretch; }
.tool-row.first { height: 34px; }
.tool-row.first .icon { height: 26px; }
.tool-row .picked { width: 46px; }
.group { display: flex; flex: none; }
.group button { flex: 1; }
.group.dim { color: #6c6c6c; }
.user { width: 54px; justify-content: flex-start; padding-left: 9px; }
.user .tiny { margin-left: -4px; }
.sep { flex: none; width: 6px; margin: 2px 0; }
.solid { background: linear-gradient(#777, #777) center / 1px 60% no-repeat; }
.dots { background: repeating-linear-gradient(#999 0 2px, transparent 2px 4px) center / 1px 100% no-repeat; }

.props { display: flex; align-items: center; height: 49px; padding: 0 10px; border-bottom: 2px solid #000; }
.drop, .spin, .chip { height: 34px; border: 2px solid #6b6b6b; border-radius: 5px; display: flex; align-items: center; flex: none; }
.drop select { appearance: none; flex: 1; height: 100%; }
.drop .tiny { margin-right: 2px; }
.shape { width: 60px; }
.style { width: 156px; margin: 0 15px; }
.stroke { width: 112px; height: 3px; background: #ececec; margin-left: 11px; }
.hatch { width: 69px; margin-right: 15px; }
.chip { width: 33px; }
.swatch { width: 18px; height: 19px; border: 1px solid #fff; }
.navy { background: #0000a0; }
.sky { background: #0a84dd; }
.cap { flex: none; }
.line-cap { width: 42px; margin-left: 14px; }
.fill-cap { width: 33px; margin-left: 14px; }
.hatch-cap { width: 55px; margin-left: 21px; }
.spin { overflow: hidden; }
.spin input { flex: 1; text-align: right; padding-right: 10px; }
.chip + .spin { margin-left: 14px; }
.w83 { width: 83px; }
.w112 { width: 112px; }
.steps { display: flex; flex-direction: column; width: 20px; height: 100%; border-right: 1px solid #6b6b6b; flex: none; }
.steps button { flex: 1; overflow: hidden; }
.steps button + button { border-top: 1px solid #6b6b6b; }
.steps .icon { width: 18px; height: 18px; stroke-width: 2; }

.work { display: flex; height: 498px; }
.rail-top { width: 49px; border-right: 1px solid #000; display: flex; flex-direction: column; flex: none; }
.rail-top button { height: 48px; }
.chest { width: 513px; border-right: 3px solid #000; display: flex; flex-direction: column; flex: none; }
.chest header { height: 46px; display: flex; align-items: center; padding-left: 15px; padding-right: 9px; }
.chest h2 { width: 105px; }
.chest .find { margin-left: auto; width: 350px; height: 35px; border: 2px solid #6b6b6b; border-radius: 5px; display: flex; align-items: center; padding: 0 10px 0 7px; }
.chest .find input { flex: 1; }
.find input::placeholder { color: inherit; opacity: 1; }
.chest .find, .chest .find input { color: #9a9a9a; }
.chest .find .icon { width: 26px; height: 20px; }
.chest-body { height: 412px; display: flex; overflow: hidden; }
ul { list-style: none; margin: 0; padding: 3px 0 0; flex: 1; }
li { height: 49px; display: flex; align-items: center; }
li span { flex: 1; }
.open { width: 22px; height: 22px; margin: 0 8px 0 10px; stroke-width: 2; }
.cog { margin-bottom: 6px; }
.go { width: 18px; height: 22px; margin: 0 -2px 6px 6px; stroke-width: 2; }
.scroll { width: 22px; margin-right: 6px; background: #3b3b3b; display: flex; flex-direction: column; align-items: center; justify-content: space-between; }
.scroll .icon { width: 22px; height: 23px; }
.scroll i { width: 20px; height: 139px; background: #8d8d8d; margin-bottom: auto; }
.chest footer { flex: 1; display: flex; align-items: center; padding: 0 10px 0 7px; gap: 14px; }
.tri { fill: none; stroke: #ddd; stroke-width: 2; }
input[type="range"] { flex: 1; appearance: none; height: 4px; background: #3f3f3f; border-radius: 2px; }
input[type="range"]::-webkit-slider-thumb { appearance: none; width: 16px; height: 16px; border-radius: 50%; background: #8d8d8d; }

.doc { flex: 1; min-width: 0; display: flex; flex-direction: column; }
.tabs { height: 43px; flex: none; display: flex; }
.tab { width: 126px; background: #444; display: flex; align-items: center; justify-content: space-between; padding: 4px 12px 0 11px; }
.tab .icon { width: 22px; height: 22px; }
.plan { display: block; width: 100%; height: 408px; flex: none; border-left: 2px solid #2d2d2d; }
.plan text { font-family: "Liberation Sans", sans-serif; fill: #222; }
.t13 { font-size: 13px; }
.t14 { font-size: 14px; }
.mid { text-anchor: middle; }
.bold { font-weight: 700; }
.small { font-size: 10px; }
.status { flex: 1; display: flex; align-items: stretch; border-top: 1px solid #bbb; white-space: nowrap; overflow: hidden; }
.status .sep { width: 4px; }
.faded { color: #6c6c6c; }
.sheet { width: 356px; height: 24px; border: 2px solid #6b6b6b; border-radius: 3px; text-align: center; align-self: center; margin: 0 6px 0 4px; flex: none; }
.next { width: 36px; flex: none; }
.fold { width: 12px; background: #3d3d3d; margin-left: 47px; flex: none; }
.fold .icon { width: 20px; height: 24px; }
.measure { margin-left: 100px; display: flex; align-items: center; font-size: 18px; flex: none; }
.measure .icon + .icon { margin: 0 22px 0 19px; }
.measure .cal { margin: 0 20px 0 25px; }

.panel { position: relative; display: flex; background: #2d2d2d; overflow: hidden; }
.subject { height: 667px; border-top: 3px solid #000; }
.labor { height: 719px; margin-top: 41px; }
.layers { height: 245px; margin-top: 44px; border-top: 1px solid #111; border-bottom: 1px solid #888; }
.author { height: 142px; margin-top: 33px; border-top: 2px solid #000; }
.bulk { height: 514px; margin-top: 161px; border-top: 2px solid #555; }
.rail { width: 49px; flex: none; border-right: 1px solid #000; display: flex; flex-direction: column; }
.rail .expand { height: 46px; margin-top: 4px; }
.rail .picked { height: 48px; margin-top: 2px; }
.rail .icon { width: 26px; height: 26px; }
.labor .rail .expand { margin-top: 1px; }
.sheet-area { flex: 1; min-width: 0; display: flex; flex-direction: column; }
.bar { flex: none; height: 46px; margin-top: 4px; display: flex; align-items: center; padding-left: 15px; }
.labor .bar { margin-top: 1px; }
.bar h2 { width: 121px; }
.bar .hide { width: 26px; height: 26px; margin: 0 10px 0 9px; }
.bar .find { height: 30px; border: 2px solid #7a7a7a; border-radius: 3px; display: flex; align-items: center; padding: 0 4px; color: #fff; font-weight: 500; flex: none; }
.bar .find .icon { width: 22px; height: 24px; }
.bar .find .x { width: 18px; height: 18px; }
.bar .find input { flex: 1; margin-left: 9px; }
.filter { margin-left: 37px; gap: 7px; font-weight: 600; font-size: 20px; color: #fff; white-space: nowrap; }
.filter .icon { width: 22px; height: 24px; }
.share { margin-left: 47px; }
.share .icon { width: 26px; height: 26px; }
.table-wrap { flex: 1; min-height: 0; overflow: hidden; }
table { width: 100%; table-layout: fixed; border-collapse: separate; border-spacing: 0; }
th { height: 48px; padding: 2px 0 0 12px; text-align: left; font-weight: 500; color: #fff; background: #3d3d3d; border-right: 1px solid #666; position: relative; z-index: 1; white-space: nowrap; overflow: hidden; }
th:last-child, td:last-child { border-right: 0; }
th.subj { padding-left: 42px; }
th.sorted::before { content: ""; position: absolute; left: 0; right: 0; bottom: 0; height: 3px; background: #0a84dd; }
.foldbox { position: absolute; left: 7px; top: 17px; width: 15px; height: 15px; border: 1px solid #aaa; font: 13px/12px Roboto, sans-serif; text-align: center; }
.caret { position: absolute; right: 11px; top: 13px; width: 22px; height: 22px; }
td { padding: 0; border-right: 1px solid #5c5c5c; vertical-align: top; font-weight: 700; color: #fff; white-space: nowrap; }
.end td { border-bottom: 1px solid #8c8c8c; }
.item td { font-weight: 400; color: #e6e6e6; }
.cell { display: flex; align-items: center; height: 20px; margin-top: 3px; }
.num .cell { justify-content: flex-end; margin-top: 9px; padding-right: 6px; }
td.layer .cell { margin-top: 5px; }
.who .cell { padding-left: 4px; }
.chev { width: 22px; height: 22px; margin: 0 10px; }
.money { flex: 1; text-align: right; padding-right: 6px; }
.subj:has(.money) .cell { height: 32px; }
.subj:has(.money) .chev { margin-bottom: 10px; }
.item .subj .cell { padding-left: 60px; }
.kind { margin-right: 3px; }
.eye { width: 20px; height: 20px; border: 1px solid #777; display: flex; flex: none; margin: 0 9px 0 4px; }
.subj .eye { margin-left: 2px; }
.eye .icon { width: 18px; height: 18px; }
.selected td { background: #185886; }
.selected .eye { background: #2d2d2d; }
.over { position: absolute; inset: 0; width: 100%; height: 100%; z-index: 3; pointer-events: none; }

.bulk { font-size: 13px; line-height: 16px; }
.bulk .rail { width: 39px; }
.bulk .rail .expand { height: 36px; margin-top: 0; }
.bulk .rail .picked { height: 37px; margin-top: 2px; }
.bulk .rail .icon { width: 20px; height: 22px; }
.bulk .bar { height: 36px; margin-top: 0; padding-left: 11px; }
.bulk h2, .bulk .filter { font-size: 16px; }
.bulk .bar h2 { width: 97px; }
.bulk .tiny { width: 16px; height: 16px; }
.bulk .hide { width: 22px; height: 24px; margin: 0 8px 0 6px; }
.bulk .bar .find { height: 24px; }
.bulk .bar .find .icon { width: 18px; height: 18px; }
.bulk .filter { margin-left: 29px; gap: 5px; }
.bulk .filter .icon { width: 18px; height: 22px; }
.bulk .share { margin-left: 36px; }
.bulk .share .icon { width: 20px; height: 22px; }
.tail { margin-left: auto; margin-right: -12px; }
.tail .icon { width: 22px; height: 22px; }
.bulk th { height: 38px; padding-left: 9px; }
.bulk th.subj { padding-left: 32px; }
.bulk .foldbox { left: 5px; top: 13px; width: 12px; height: 12px; font-size: 11px; line-height: 10px; }
.bulk .caret { width: 18px; height: 18px; top: 10px; right: 8px; }
.bulk .cell { height: 16px; margin-top: 2px; }
.bulk .num .cell { margin-top: 5px; padding-right: 4px; }
.bulk td.layer .cell { margin-top: 4px; }
.bulk .cut .cell { margin-top: -9px; }
.bulk .cut .num .cell { margin-top: -6px; }
.bulk .chev { width: 16px; height: 16px; margin: 0 8px; }
.bulk .item .subj .cell { padding-left: 47px; }
.bulk .kind { width: 22px; height: 22px; margin-right: 2px; }
.bulk .eye { width: 16px; height: 16px; margin: 0 7px 0 4px; }
.bulk .eye .icon { width: 14px; height: 14px; }
.gutter { width: 19px; flex: none; margin-top: 37px; background: #f0f0f0; display: flex; justify-content: center; }
.gutter i { width: 3px; height: 128px; background: #8a8a8a; margin-top: 163px; }
.estimate { width: 381px; flex: none; border-left: 2px solid #000; padding-right: 16px; display: flex; flex-direction: column; gap: 5px; align-items: flex-end; }
.stub { width: 59px; height: 5px; border: 1px solid #777; border-top: 0; flex: none; }
.field { display: flex; align-items: center; gap: 5px; height: 18px; flex: none; }
.field.tall { height: 26px; }
.field label { white-space: nowrap; }
.box { width: 59px; height: 100%; border: 1px solid #777; border-radius: 2px; display: flex; overflow: hidden; }
.box input { flex: 1; width: 100%; text-align: right; padding-right: 2px; }
.box .steps { width: 14px; }
.box .steps .icon { width: 10px; height: 10px; }
.note { position: absolute; left: 1151px; top: 172px; width: 357px; height: 113px; margin: 0; padding: 15px 20px; background: #fff; color: #000; border: 3px solid #00ff48; border-radius: 14px; font: 24px/26px "Liberation Sans", sans-serif; z-index: 4; white-space: nowrap; }
</style>
